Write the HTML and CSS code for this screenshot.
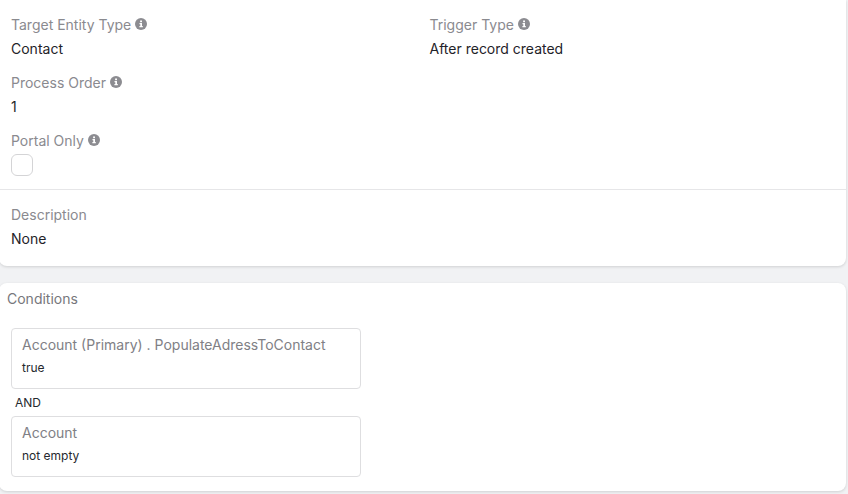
FILE: index.html
```html
<!DOCTYPE html>
<html lang="en">
<head>
    <meta charset="UTF-8">
    <meta name="viewport" content="width=device-width, initial-scale=1.0">
    <title>Workflow Details</title>
    <link rel="stylesheet" href="styles.css">
</head>
<body>
    <svg class="icon-defs" width="0" height="0">
        <symbol id="info" viewBox="0 0 12 12">
            <circle cx="6" cy="6" r="6" fill="#8c8c91"/>
            <rect x="5.1" y="2.5" width="1.9" height="1.7" fill="#fff"/>
            <path d="M4.5 5.1H7v3h.8v1.2H4.4V8.1h.9V6.3h-.8z" fill="#fff"/>
        </symbol>
    </svg>
    <div class="page">
        <section class="card card-details">
            <div class="fields">
                <div class="field">
                    <div class="label">Target Entity Type <svg class="info"><use href="#info"/></svg></div>
                    <div class="value">Contact</div>
                </div>
                <div class="field">
                    <div class="label">Trigger Type <svg class="info"><use href="#info"/></svg></div>
                    <div class="value">After record created</div>
                </div>
                <div class="field">
                    <div class="label">Process Order <svg class="info"><use href="#info"/></svg></div>
                    <div class="value">1</div>
                </div>
                <div class="field field-empty"></div>
                <div class="field">
                    <div class="label">Portal Only <svg class="info"><use href="#info"/></svg></div>
                    <div class="checkbox"></div>
                </div>
            </div>
            <div class="description">
                <div class="label">Description</div>
                <div class="value">None</div>
            </div>
        </section>

        <section class="card card-conditions">
            <h2>Conditions</h2>
            <div class="condition">
                <div class="condition-name">Account (Primary) . PopulateAdressToContact</div>
                <div class="condition-value">true</div>
            </div>
            <div class="operator">AND</div>
            <div class="condition">
                <div class="condition-name">Account</div>
                <div class="condition-value">not empty</div>
            </div>
        </section>
    </div>
</body>
</html>
```

FILE: styles.css
```css
html, body {
    height: 100%;
}
body {
    font-family: Inter, "Liberation Sans", sans-serif;
    font-size: 14px;
    background-color: #f1f2f4;
    margin: 0;
    overflow: hidden;
}
.icon-defs {
    display: block;
    height: 0;
}
.page {
    display: flex;
    flex-direction: column;
    gap: 17px;
    width: 847px;
    margin-left: -1px;
}
.card {
    background-color: #fff;
    border-radius: 8px;
    box-shadow: 0 1px 3px rgba(0, 0, 0, 0.14);
}
.card-details {
    height: 266px;
    border-top-left-radius: 0;
    border-top-right-radius: 0;
}
.fields {
    display: grid;
    grid-template-columns: 418.5px 1fr;
    grid-auto-rows: 58px;
    height: 190px;
    padding: 16px 0 0 12px;
    box-sizing: border-box;
    border-bottom: 1px solid #e6e6e8;
}
.label {
    display: flex;
    align-items: center;
    gap: 4px;
    height: 18px;
    line-height: 18px;
    color: #8a8a8f;
}
.value {
    margin-top: 6px;
    height: 18px;
    line-height: 18px;
    color: #1f2329;
}
.info {
    width: 12px;
    height: 12px;
    margin-top: -2px;
}
.checkbox {
    width: 22px;
    height: 22px;
    margin-top: 4px;
    box-sizing: border-box;
    border: 1px solid #d4d4d6;
    border-radius: 6px;
}
.description {
    padding: 16px 0 0 12px;
}
.card-conditions {
    height: 208px;
    padding: 1px 0 0 12px;
    box-sizing: border-box;
}
.card-conditions h2 {
    margin: 6px 0 20px -4px;
    height: 18px;
    line-height: 18px;
    font-size: 14px;
    font-weight: 400;
    color: #77777c;
}
.condition {
    width: 350px;
    height: 61px;
    padding: 7px 10px;
    box-sizing: border-box;
    border: 1px solid #dedee0;
    border-radius: 4px;
}
.condition-name {
    height: 18px;
    line-height: 18px;
    color: #808085;
}
.condition-value {
    margin-top: 6px;
    height: 16px;
    line-height: 16px;
    font-size: 12px;
    color: #26292e;
}
.operator {
    height: 27px;
    line-height: 27px;
    padding-left: 4px;
    font-size: 12px;
    color: #26292e;
}
```
